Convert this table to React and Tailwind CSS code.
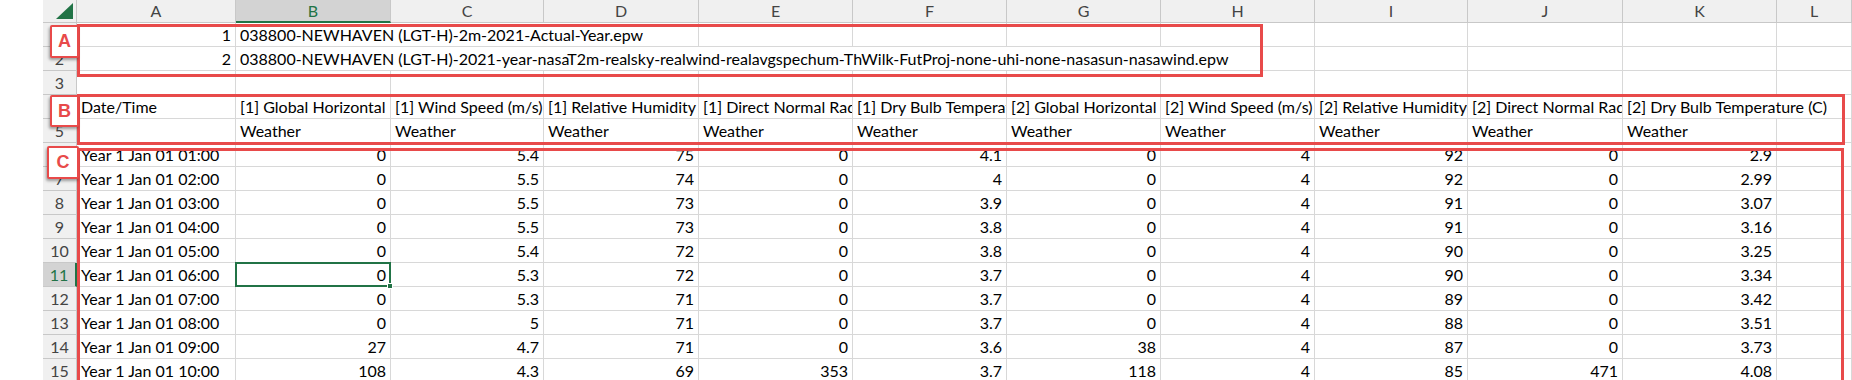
import React from 'react'

const GRID =
  'grid grid-cols-[43px_34px_159px_155px_153px_155px_154px_154px_154px_154px_153px_155px_154px_1fr]'

const letters = ['A', 'B', 'C', 'D', 'E', 'F', 'G', 'H', 'I', 'J', 'K', 'L']

const spanCls = { 1: '', 2: 'col-span-2', 3: 'col-span-3', 7: 'col-span-7' }

const times = ['01:00', '02:00', '03:00', '04:00', '05:00', '06:00', '07:00', '08:00', '09:00', '10:00']
const data = [
  ['0', '5.4', '75', '0', '4.1', '0', '4', '92', '0', '2.9'],
  ['0', '5.5', '74', '0', '4', '0', '4', '92', '0', '2.99'],
  ['0', '5.5', '73', '0', '3.9', '0', '4', '91', '0', '3.07'],
  ['0', '5.5', '73', '0', '3.8', '0', '4', '91', '0', '3.16'],
  ['0', '5.4', '72', '0', '3.8', '0', '4', '90', '0', '3.25'],
  ['0', '5.3', '72', '0', '3.7', '0', '4', '90', '0', '3.34'],
  ['0', '5.3', '71', '0', '3.7', '0', '4', '89', '0', '3.42'],
  ['0', '5', '71', '0', '3.7', '0', '4', '88', '0', '3.51'],
  ['27', '4.7', '71', '0', '3.6', '38', '4', '87', '0', '3.73'],
  ['108', '4.3', '69', '353', '3.7', '118', '4', '85', '471', '4.08'],
]

const empty = n => Array.from({ length: n }, () => ({ t: '' }))

const rows = [
  { n: 1, cells: [{ t: '1', r: true }, { t: '038800-NEWHAVEN (LGT-H)-2m-2021-Actual-Year.epw', span: 3 }, ...empty(8)] },
  {
    n: 2,
    cells: [
      { t: '2', r: true },
      { t: '038800-NEWHAVEN (LGT-H)-2021-year-nasaT2m-realsky-realwind-realavgspechum-ThWilk-FutProj-none-uhi-none-nasasun-nasawind.epw', span: 7 },
      ...empty(4),
    ],
  },
  { n: 3, cells: empty(12) },
  {
    n: 4,
    cells: [
      { t: 'Date/Time' },
      { t: '[1] Global Horizontal Radiation (W/m2)' },
      { t: '[1] Wind Speed (m/s)' },
      { t: '[1] Relative Humidity (%)' },
      { t: '[1] Direct Normal Radiation (W/m2)' },
      { t: '[1] Dry Bulb Temperature (C)' },
      { t: '[2] Global Horizontal Radiation (W/m2)' },
      { t: '[2] Wind Speed (m/s)' },
      { t: '[2] Relative Humidity (%)' },
      { t: '[2] Direct Normal Radiation (W/m2)' },
      { t: '[2] Dry Bulb Temperature (C)', span: 2 },
    ],
  },
  { n: 5, cells: [{ t: '' }, ...Array.from({ length: 10 }, () => ({ t: 'Weather' })), { t: '' }] },
  ...times.map((tm, i) => ({
    n: 6 + i,
    cells: [{ t: `Year 1 Jan 01 ${tm}` }, ...data[i].map(v => ({ t: v, r: true })), { t: '' }],
  })),
]

// red callout: outline box + lettered tag, drawn over the sheet
function Callout({ letter, box, tag }) {
  return (
    <>
      <div className={`absolute border-[3px] border-[#e84a4a] ${box}`} />
      <div
        className={`absolute flex items-center justify-center bg-white border-2 border-[#e84a4a] rounded-[2px] shadow-[-1px_2px_3px_rgba(0,0,0,0.35)] text-[#e84a4a] text-[18px] font-bold font-['Liberation_Sans',sans-serif] ${tag}`}
      >
        {letter}
      </div>
    </>
  )
}

export default function App() {
  return (
    <div className="relative w-[1852px] h-[380px] overflow-hidden bg-white font-['Lato',sans-serif] text-[16px] text-black">
      {/* column headers */}
      <div className={`${GRID} h-[23px]`}>
        <div className="bg-white" />
        <div className="flex items-end justify-end pr-[3px] pb-[3px] bg-[#f0f0f0] border-r border-b border-[#c8c8c8]">
          <svg width="17" height="16" viewBox="0 0 17 16">
            <polygon points="17,0 17,16 0,16" fill="#217346" />
          </svg>
        </div>
        {letters.map(l => (
          <div
            key={l}
            className={`flex items-center justify-center leading-none ${
              l === 'B'
                ? 'bg-[#d3d3d3] text-[#217346] border-b-2 border-b-[#217346] border-r border-r-[#c8c8c8]'
                : 'bg-[#f0f0f0] text-[#444] border-r border-b border-[#c8c8c8]'
            }`}
          >
            {l}
          </div>
        ))}
      </div>

      {/* rows */}
      {rows.map(row => (
        <div key={row.n} className={`${GRID} h-[24px]`}>
          <div className="bg-white" />
          <div
            className={`flex items-center justify-center leading-none ${
              row.n === 11
                ? 'bg-[#d3d3d3] text-[#217346] border-r-2 border-r-[#217346] border-b border-b-[#c8c8c8]'
                : 'bg-[#f0f0f0] text-[#444] border-r border-b border-[#c8c8c8]'
            }`}
          >
            {row.n}
          </div>
          {row.cells.map((c, i) => {
            const selected = row.n === 11 && i === 1
            return (
              <div
                key={i}
                className={`relative border-r border-b border-[#d8d8d8] px-[4px] leading-[23px] whitespace-nowrap ${
                  selected ? 'overflow-visible z-10' : 'overflow-hidden'
                } ${c.r ? 'text-right' : 'text-left'} ${spanCls[c.span || 1]}`}
              >
                {c.t}
                {selected && (
                  <div className="absolute -left-px -top-px -right-px -bottom-px border-2 border-[#217346]">
                    <div className="absolute -right-[4px] -bottom-[4px] w-[6px] h-[6px] bg-[#217346] border border-white" />
                  </div>
                )}
              </div>
            )
          })}
        </div>
      ))}

      <Callout letter="A" box="left-[77px] top-[24px] w-[1186px] h-[53px]" tag="left-[50px] top-[25px] w-[29px] h-[33px]" />
      <Callout letter="B" box="left-[77px] top-[94px] w-[1768px] h-[51px]" tag="left-[50px] top-[95px] w-[29px] h-[32px]" />
      <Callout letter="C" box="left-[77px] top-[148px] w-[1767px] h-[240px]" tag="left-[47px] top-[146px] w-[32px] h-[33px]" />
    </div>
  )
}
